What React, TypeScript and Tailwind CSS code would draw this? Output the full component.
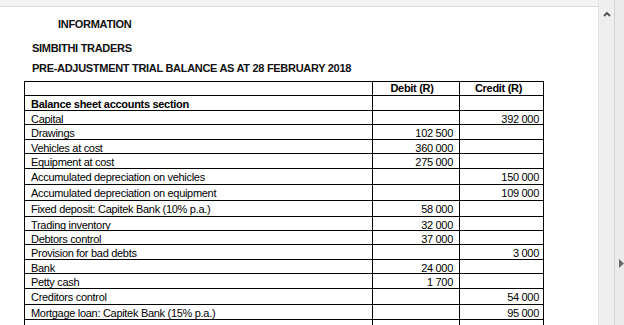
import React from "react";

// ── Data ──────────────────────────────────────────────────────────────────────

type Row = { label: string; debit?: string; credit?: string; h: string };

const ROWS: Row[] = [
  { label: "Capital", credit: "392 000", h: "h-[14px]" },
  { label: "Drawings", debit: "102 500", h: "h-[15px]" },
  { label: "Vehicles at cost", debit: "360 000", h: "h-[14px]" },
  { label: "Equipment at cost", debit: "275 000", h: "h-[15px]" },
  { label: "Accumulated depreciation on vehicles", credit: "150 000", h: "h-[16px]" },
  { label: "Accumulated depreciation on equipment", credit: "109 000", h: "h-[16px]" },
  { label: "Fixed deposit: Capitek Bank (10% p.a.)", debit: "58 000", h: "h-[16px]" },
  { label: "Trading inventory", debit: "32 000", h: "h-[14px]" },
  { label: "Debtors control", debit: "37 000", h: "h-[14px]" },
  { label: "Provision for bad debts", credit: "3 000", h: "h-[15px]" },
  { label: "Bank", debit: "24 000", h: "h-[14px]" },
  { label: "Petty cash", debit: "1 700", h: "h-[15px]" },
  { label: "Creditors control", credit: "54 000", h: "h-[16px]" },
  { label: "Mortgage loan: Capitek Bank (15% p.a.)", credit: "95 000", h: "h-[15px]" },
  { label: "", h: "h-[15px]" },
];

// narrow-ish Arial look: Liberation Sans, a bit smaller and tighter
const FONT = "font-['Liberation_Sans',Arial,sans-serif] tracking-[-0.3px]";

// ── Table row ─────────────────────────────────────────────────────────────────

function TableRow({ label, debit, credit, h, bold }: Row & { bold?: boolean }) {
  return (
    <div className={`flex border-b border-black ${h} leading-[14px] text-[11px]`}>
      <div className={`w-[348px] border-r border-black pl-[6px] pt-[1px] ${bold ? "font-bold" : ""}`}>
        {label}
      </div>
      <div className="w-[87px] border-r border-black pr-[6px] pt-[1px] text-right">{debit}</div>
      <div className="w-[84px] border-r border-black pr-[4px] pt-[1px] text-right">{credit}</div>
    </div>
  );
}

// ── Page ──────────────────────────────────────────────────────────────────────

export default function App() {
  return (
    <div className={`flex h-[325px] w-[624px] overflow-hidden bg-white text-black ${FONT}`}>
      {/* document area */}
      <div className="flex w-[598px] flex-col">
        <div className="h-[7px] shrink-0 border-b border-[#dcdcdc] bg-[#f3f3f3]" />

        <div className="flex flex-col pl-[24px] pt-[10px]">
          <div className="h-[14px] pl-[34px] text-[11px] font-bold leading-[14px] text-[#111]">INFORMATION</div>
          <div className="mt-[10px] h-[14px] pl-[8px] text-[11px] font-bold leading-[14px] text-[#111]">
            SIMBITHI TRADERS
          </div>
          <div className="mt-[6px] h-[14px] pl-[8px] text-[11px] font-bold leading-[14px] text-[#111]">
            PRE-ADJUSTMENT TRIAL BALANCE AS AT 28 FEBRUARY 2018
          </div>

          {/* trial balance */}
          <div className="mt-[6px] w-[520px] border-l border-t border-black">
            <div className="flex h-[14px] border-b border-black text-[11px] font-bold leading-[13px]">
              <div className="w-[348px] border-r border-black" />
              <div className="w-[87px] border-r border-black pr-[8px] text-center">Debit (R)</div>
              <div className="w-[84px] border-r border-black pr-[6px] text-center">Credit (R)</div>
            </div>
            <TableRow label="Balance sheet accounts section" h="h-[15px]" bold />
            {ROWS.map((r, i) => (
              <TableRow key={i} {...r} />
            ))}
          </div>
        </div>
      </div>

      {/* vertical scrollbar */}
      <div className="flex w-[17px] shrink-0 justify-center border-l border-r border-l-[#e2e2e2] border-r-[#d4d4d4] bg-[#efefef] pt-[11px]">
        <svg width="8" height="6" viewBox="0 0 8 6">
          <path d="M1 5 L4 2 L7 5" fill="none" stroke="#505050" strokeWidth="1.8" />
        </svg>
      </div>

      {/* side strip */}
      <div className="flex flex-1 flex-col bg-[#ebebeb] pl-[4px] pt-[259px]">
        <svg width="5" height="9" viewBox="0 0 5 9">
          <path d="M0 0 L5 4.5 L0 9 Z" fill="#6a6a6a" />
        </svg>
      </div>
    </div>
  );
}
